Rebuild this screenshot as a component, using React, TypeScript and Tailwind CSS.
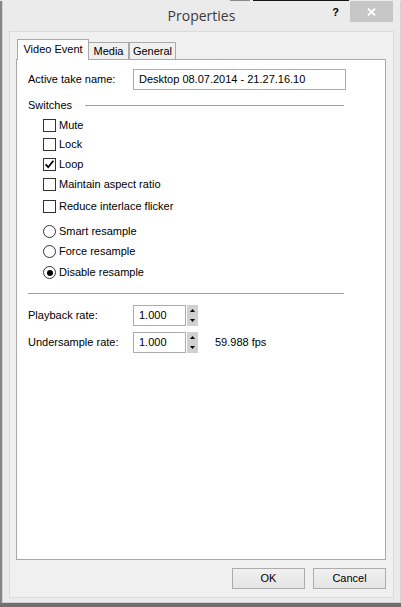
import React from 'react';

interface OptionProps {
  label: string;
  checked?: boolean;
  className?: string;
}

const CheckOption: React.FC<OptionProps> = ({ label, checked, className = '' }) => (
  <div className={`flex h-[13px] items-center pl-[15px] ${className}`}>
    <span className="flex h-[13px] w-[13px] shrink-0 items-center justify-center border border-[#333333] bg-white">
      {checked && (
        <svg width="11" height="11" viewBox="0 0 11 11">
          <path d="M1.6 5.4 L4.2 8.2 L9.4 1.8" fill="none" stroke="#000" strokeWidth="1.8" />
        </svg>
      )}
    </span>
    <span className="ml-[3px] whitespace-nowrap">{label}</span>
  </div>
);

const RadioOption: React.FC<OptionProps> = ({ label, checked, className = '' }) => (
  <div className={`flex h-[13px] items-center pl-[15px] ${className}`}>
    <span className="flex h-[13px] w-[13px] shrink-0 items-center justify-center rounded-full border border-[#333333] bg-white">
      {checked && <span className="h-[6px] w-[6px] rounded-full bg-black" />}
    </span>
    <span className="ml-[3px] whitespace-nowrap">{label}</span>
  </div>
);

const SpinRow: React.FC<{ label: string; value: string; extra?: string; className?: string }> = ({
  label,
  value,
  extra,
  className = ''
}) => (
  <div className={`flex h-[21px] items-center ${className}`}>
    <span className="w-[105px] shrink-0">{label}</span>
    <div className="flex h-[21px] w-[53px] shrink-0 items-center border border-[#ababab] bg-white pl-[5px]">
      {value}
    </div>
    <div className="ml-px flex h-[21px] w-[11px] shrink-0 flex-col items-center justify-between bg-[#d0d0d0] py-[4px]">
      <svg width="5" height="3" viewBox="0 0 5 3">
        <path d="M0 3 L2.5 0 L5 3 Z" fill="#000" />
      </svg>
      <svg width="5" height="3" viewBox="0 0 5 3">
        <path d="M0 0 L2.5 3 L5 0 Z" fill="#000" />
      </svg>
    </div>
    {extra && <span className="ml-[17px] whitespace-nowrap">{extra}</span>}
  </div>
);

export default function App() {
  return (
    <div className="flex h-[607px] w-[401px] flex-col overflow-hidden bg-[#7d7d7d] font-['Liberation_Sans',Arial,sans-serif] text-[11px] leading-[13px] text-black">
      {/* screen edge behind the dialog */}
      <div className="flex h-px shrink-0">
        <div className="w-[230px] bg-[#ebebeb]" />
        <div className="w-[20px] bg-[#8a8a8a]" />
        <div className="w-[3px] bg-[#ebebeb]" />
        <div className="w-[96px] bg-[#151515]" />
        <div className="flex-1 bg-[#ebebeb]" />
      </div>

      <div className="flex h-[602px] shrink-0">
        <div className="w-[2px] bg-[#858585]" />

        {/* dialog window */}
        <div className="flex w-[399px] flex-col border-x border-b border-[#d2d2d2] bg-[#ebebeb]">
          <div className="grid h-[30px] shrink-0 grid-cols-[1fr_auto_1fr]">
            <div />
            <div className="flex items-center pb-[1px] font-['Open_Sans',sans-serif] text-[14px] text-[#3a3a3a]">
              Properties
            </div>
            <div className="flex items-start justify-end pr-[7px]">
              <span className="mr-[11px] mt-[5px] text-[11px] font-bold leading-[13px]">?</span>
              <div className="flex h-[21px] w-[43px] items-center justify-center bg-[#c7c7c7]">
                <svg width="9" height="8" viewBox="0 0 9 8">
                  <path d="M1 0.5 L8 7.5 M8 0.5 L1 7.5" stroke="#fff" strokeWidth="1.8" />
                </svg>
              </div>
            </div>
          </div>

          <div className="mx-[6px] mb-[4px] flex h-[567px] flex-col border border-[#dadada] bg-[#f0f0f0] pl-[6px] pr-[7px] pt-[7px] pb-[8px]">
            {/* tabs */}
            <div className="flex h-[20px] shrink-0 items-end pl-px">
              <div className="relative -mb-px flex h-[21px] w-[72px] items-center justify-center border-x border-t border-[#a9a9a9] bg-white pb-[1px]">
                Video Event
              </div>
              <div className="flex h-[17px] w-[40px] items-center justify-center border-r border-t border-[#a9a9a9] bg-[#f0f0f0] pt-[1px]">
                Media
              </div>
              <div className="flex h-[17px] w-[47px] items-center justify-center border-x border-t border-[#a9a9a9] bg-[#f0f0f0] pt-[1px]">
                General
              </div>
            </div>

            {/* tab page */}
            <div className="flex h-[501px] w-[370px] shrink-0 flex-col border border-[#a9a9a9] bg-white pl-[11px] pr-[41px]">
              <div className="mt-[9px] flex h-[21px] items-center">
                <span className="w-[105px] shrink-0">Active take name:</span>
                <div className="flex h-[21px] w-[213px] shrink-0 items-center whitespace-nowrap border border-[#ababab] pl-[5px]">
                  Desktop 08.07.2014 - 21.27.16.10
                </div>
              </div>

              <div className="mt-[9px] flex h-[13px] items-center">
                <span>Switches</span>
                <div className="ml-[13px] h-px flex-1 bg-[#a0a0a0]" />
              </div>

              <CheckOption label="Mute" className="mt-[7px]" />
              <CheckOption label="Lock" className="mt-[6px]" />
              <CheckOption label="Loop" checked className="mt-[7px]" />
              <CheckOption label="Maintain aspect ratio" className="mt-[7px]" />
              <CheckOption label="Reduce interlace flicker" className="mt-[9px]" />

              <RadioOption label="Smart resample" className="mt-[12px]" />
              <RadioOption label="Force resample" className="mt-[7px]" />
              <RadioOption label="Disable resample" checked className="mt-[8px]" />

              <div className="mt-[14px] h-px bg-[#a0a0a0]" />

              <SpinRow label="Playback rate:" value="1.000" className="mt-[11px]" />
              <SpinRow label="Undersample rate:" value="1.000" extra="59.988 fps" className="mt-[6px]" />
            </div>

            {/* dialog buttons */}
            <div className="mt-[8px] flex h-[21px] shrink-0 justify-end gap-[8px]">
              <button className="h-[21px] w-[73px] border border-[#acacac] bg-gradient-to-b from-[#f0f0f0] to-[#e5e5e5]">
                OK
              </button>
              <button className="h-[21px] w-[73px] border border-[#acacac] bg-gradient-to-b from-[#f0f0f0] to-[#e5e5e5]">
                Cancel
              </button>
            </div>
          </div>
        </div>
      </div>

      <div className="h-[4px] shrink-0 bg-[#6f6f6f]" />
    </div>
  );
}
